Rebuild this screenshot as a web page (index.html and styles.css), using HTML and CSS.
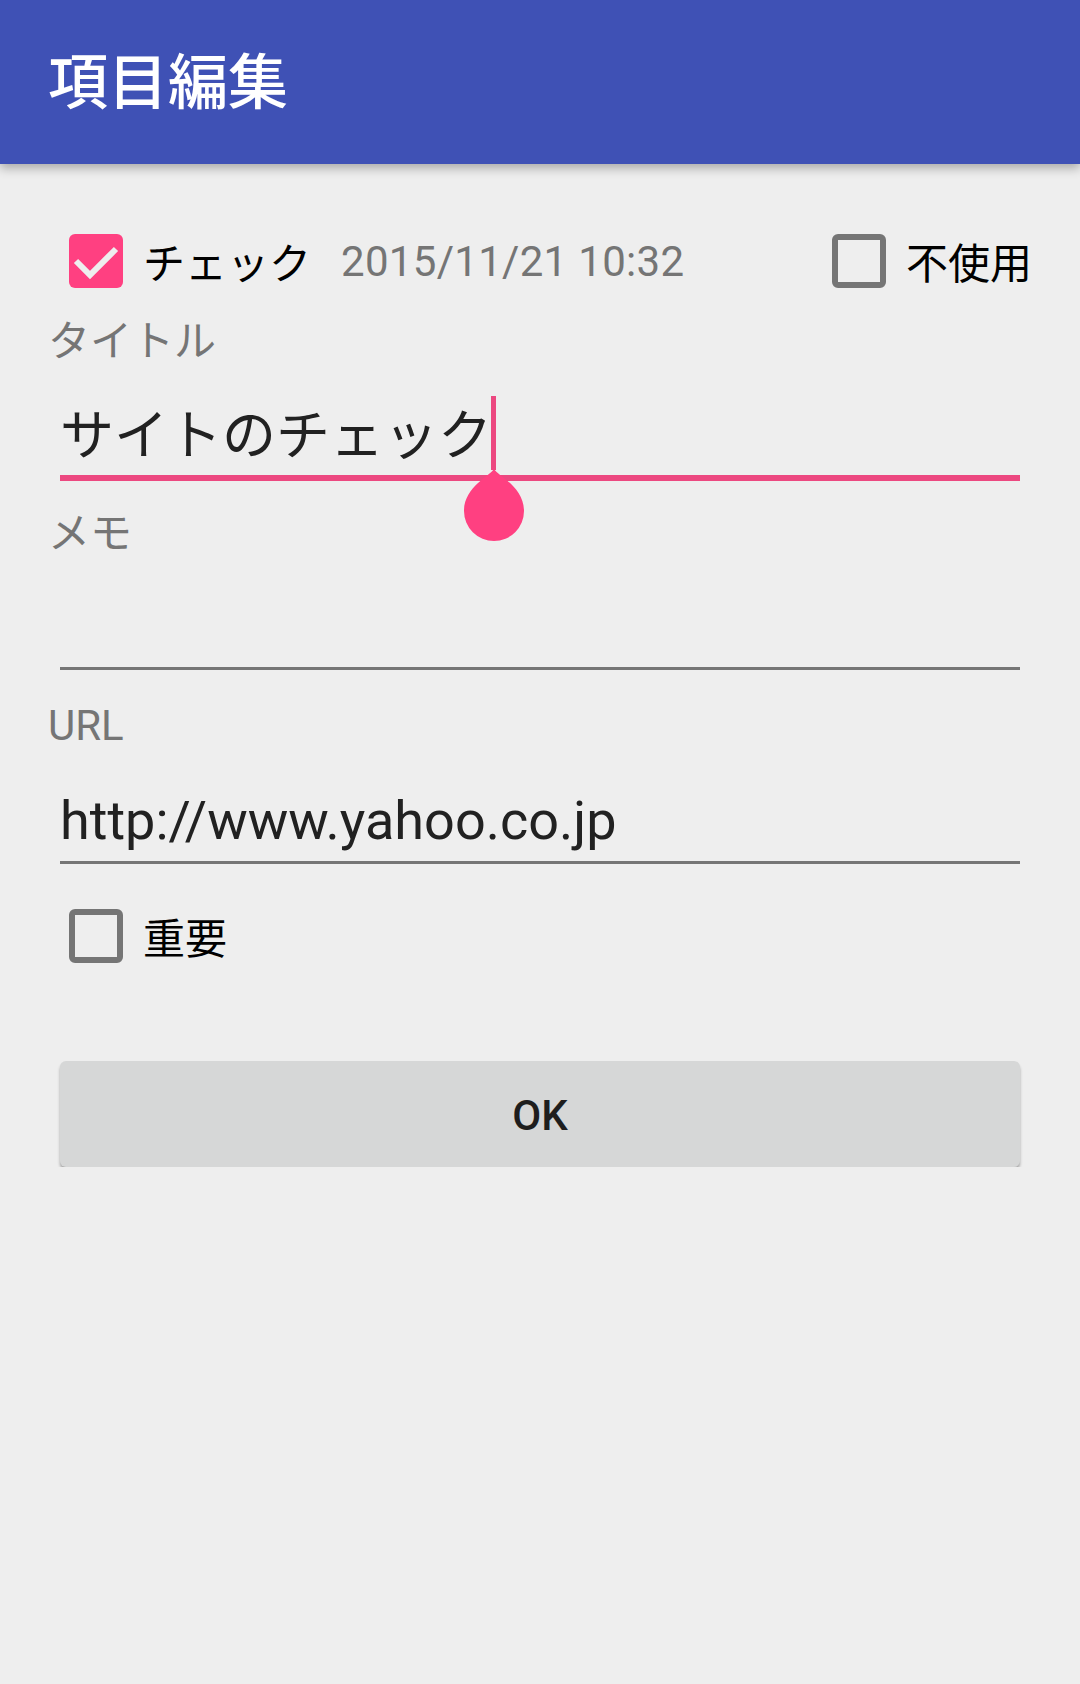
FILE: index.html
```html
<!DOCTYPE html>
<html lang="ja">
<head>
  <meta charset="UTF-8">
  <title>項目編集</title>
  <link rel="stylesheet" href="styles.css">
</head>
<body>
  <header class="appbar">
    <h1 class="appbar-title">項目編集</h1>
  </header>

  <main class="content">
    <div class="check-row">
      <label class="check">
        <span class="box checked">
          <svg width="54" height="54" viewBox="0 0 54 54"><polyline points="7,27 21,41 47,15" fill="none" stroke="#eeeeee" stroke-width="6"/></svg>
        </span>
        <span class="check-text">チェック</span>
      </label>
      <span class="date">2015/11/21 10:32</span>
      <label class="check check-right">
        <span class="box"></span>
        <span class="check-text">不使用</span>
      </label>
    </div>

    <div class="field-label first">タイトル</div>
    <div class="input jp focused">サイトのチェック<span class="caret"><span class="caret-line"></span><svg class="handle" width="60" height="72" viewBox="0 0 60 72"><path d="M30 0 C34 7 60 18 60 42 A30 30 0 0 1 0 42 C0 18 26 7 30 0 Z" fill="#ff4081"/></svg></span></div>

    <div class="field-label spaced">メモ</div>
    <div class="input memo"></div>

    <div class="field-label spaced url-label">URL</div>
    <div class="input">http://www.yahoo.co.jp</div>

    <div class="check-row important-row">
      <label class="check">
        <span class="box"></span>
        <span class="check-text">重要</span>
      </label>
    </div>

    <button class="btn-ok">OK</button>
  </main>
</body>
</html>
```

FILE: styles.css
```css
body { margin: 0; background: #eeeeee; font-family: Roboto, "Noto Sans CJK JP", sans-serif; color: #212121; }
.jp { font-family: "Noto Sans CJK JP", sans-serif; }

.appbar { position: relative; z-index: 2; height: 164px; box-sizing: border-box; padding: 0 0 8px 48px; background: #3f51b5; display: flex; align-items: center; box-shadow: 0 4px 10px rgba(0, 0, 0, 0.3); }
.appbar-title { margin: 0; color: #fff; font-family: "Noto Sans CJK JP", sans-serif; font-size: 60px; font-weight: 500; line-height: 1; }

.content { padding: 49px 48px 0; }

.check-row { display: flex; align-items: center; height: 96px; }
.check { display: flex; align-items: center; gap: 20px; margin-left: 21px; }
.check-right { margin-left: auto; }
.box { width: 54px; height: 54px; box-sizing: border-box; border: 6px solid #757575; border-radius: 6px; display: block; }
.box.checked { border: none; background: #ff4081; }
.box svg { display: block; }
.check-text { font-family: "Noto Sans CJK JP", sans-serif; font-size: 42px; line-height: 50px; color: #000; }
.date { margin-left: 30px; font-size: 42px; letter-spacing: 0.3px; color: #757575; }

.field-label { height: 58px; line-height: 58px; font-family: "Noto Sans CJK JP", sans-serif; font-size: 42px; color: #757575; }
.field-label.first { height: 57px; }
.field-label.spaced { margin-top: 20px; }
.field-label.url-label { font-family: Roboto, sans-serif; margin-top: 27px; }

.input { margin: 0 12px; padding: 34px 0 8px; height: 64px; line-height: 64px; font-size: 54px; color: #212121; border-bottom: 3px solid #757575; white-space: nowrap; }
.input.memo { padding-top: 36px; }
.input.focused { padding-bottom: 11px; border-bottom: 6px solid #ec4880; }

.caret { position: relative; display: inline-block; width: 0; height: 64px; vertical-align: top; }
.caret-line { position: absolute; left: -1px; top: -4px; width: 5px; height: 74px; background: #ec4880; }
.handle { position: absolute; left: -28px; top: 69px; z-index: 1; }

.important-row { margin-top: 24px; }

.btn-ok { display: block; width: 960px; height: 106px; margin: 77px 12px 0; padding-top: 4px; border: none; border-radius: 6px; background: #d6d7d7; box-shadow: 0 3px 3px rgba(0, 0, 0, 0.3); font-family: Roboto, sans-serif; font-size: 42px; font-weight: 500; color: #1e1e1e; }
```
